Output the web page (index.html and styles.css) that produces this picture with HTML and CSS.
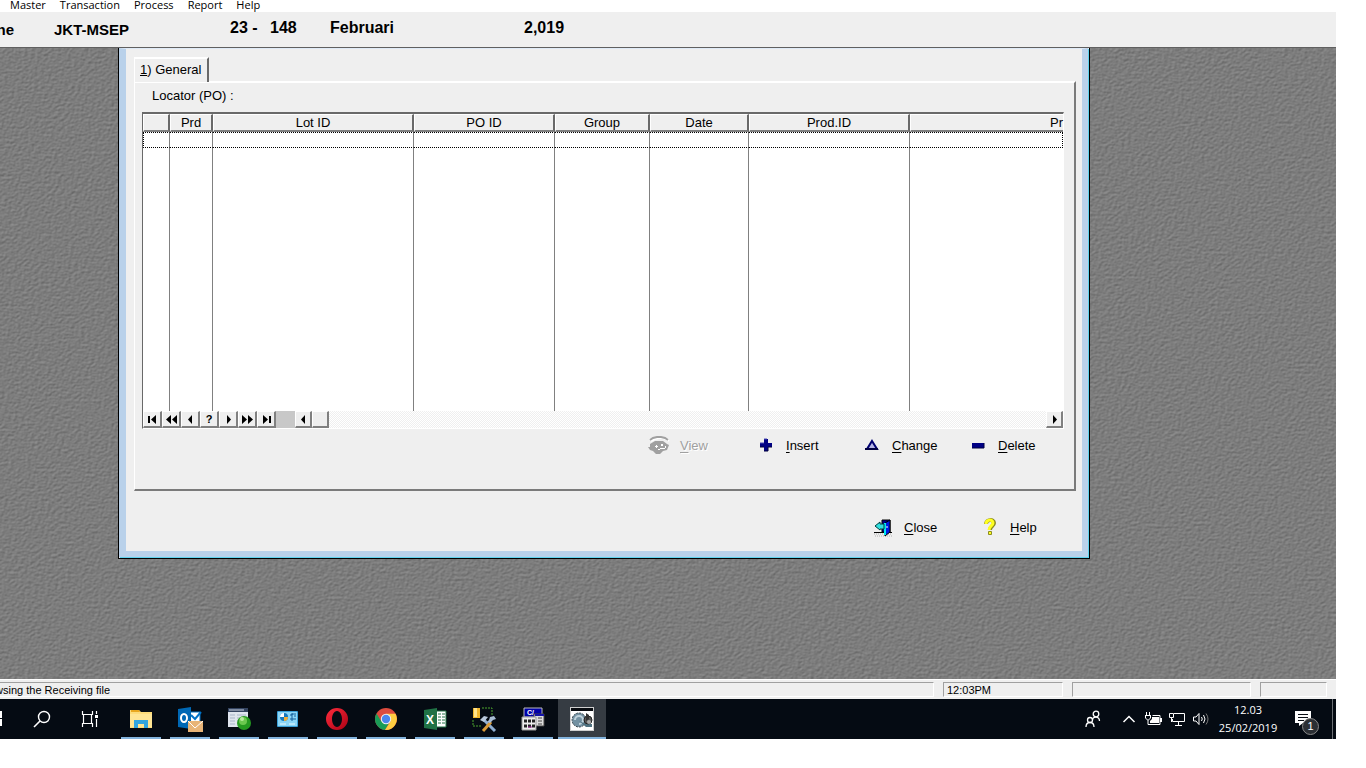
FILE: index.html
```html
<!DOCTYPE html>
<html lang="en">
<head>
    <meta charset="UTF-8">
    <meta name="viewport" content="width=device-width, initial-scale=1.0">
    <title>Receiving</title>
    <link rel="stylesheet" href="styles.css">
</head>
<body>

    <nav class="menu-bar">
        <a href="#">Master</a>
        <a href="#">Transaction</a>
        <a href="#">Process</a>
        <a href="#">Report</a>
        <a href="#">Help</a>
    </nav>

    <header class="info-bar">
        <span class="info-cut">ne</span>
        <span class="info-site">JKT-MSEP</span>
        <span class="info-day">23 -</span>
        <span class="info-number">148</span>
        <span class="info-month">Februari</span>
        <span class="info-year">2,019</span>
    </header>

    <main class="workspace">
        <!-- Embossed wallpaper -->
        <svg class="wallpaper" width="100%" height="100%" aria-hidden="true">
            <filter id="emboss" x="0" y="0" width="100%" height="100%" color-interpolation-filters="sRGB">
                <feTurbulence type="fractalNoise" baseFrequency="0.3 0.4" numOctaves="2" seed="4"/>
                <feDiffuseLighting surfaceScale="0.35" diffuseConstant="0.69" lighting-color="#fff">
                    <feDistantLight azimuth="235" elevation="45"/>
                </feDiffuseLighting>
            </filter>
            <rect width="100%" height="100%" filter="url(#emboss)"/>
        </svg>

        <section class="window">
            <div class="window-body">
                <div class="tabs" role="tablist">
                    <button class="tab" role="tab" aria-selected="true"><u>1</u>) General</button>
                </div>
                <div class="panel">
                    <p class="locator">Locator (PO) :</p>

                    <div class="browse">
                        <table>
                            <colgroup>
                                <col class="col-mark">
                                <col class="col-prd">
                                <col class="col-lot">
                                <col class="col-po">
                                <col class="col-group">
                                <col class="col-date">
                                <col class="col-prod">
                                <col>
                            </colgroup>
                            <thead>
                                <tr>
                                    <th></th>
                                    <th>Prd</th>
                                    <th>Lot ID</th>
                                    <th>PO ID</th>
                                    <th>Group</th>
                                    <th>Date</th>
                                    <th>Prod.ID</th>
                                    <th class="th-last">Pr</th>
                                </tr>
                            </thead>
                            <tbody>
                                <tr class="row-focus"><td></td><td></td><td></td><td></td><td></td><td></td><td></td><td></td></tr>
                                <tr class="row-rest"><td></td><td></td><td></td><td></td><td></td><td></td><td></td><td></td></tr>
                            </tbody>
                        </table>
                        <div class="navigator">
                            <button aria-label="First"><svg width="11" height="9"><path d="M1 1h2v7H1zM9 0v9L4 4.500z"/></svg></button>
                            <button aria-label="Page up"><svg width="11" height="9"><path d="M5 0v9L0 4.500zM11 0v9L6 4.500z"/></svg></button>
                            <button aria-label="Previous"><svg width="11" height="9"><path d="M7 0v9L3 4.500z"/></svg></button>
                            <button>?</button>
                            <button aria-label="Next"><svg width="11" height="9"><path d="M4 0v9l4-4.500z"/></svg></button>
                            <button aria-label="Page down"><svg width="11" height="9"><path d="M0 0v9l5-4.500zM6 0v9l5-4.500z"/></svg></button>
                            <button aria-label="Last"><svg width="11" height="9"><path d="M2 0v9l5-4.500zM8 1h2v7H8z"/></svg></button>
                            <span class="nav-gap"></span>
                            <button class="scroll-btn" aria-label="Scroll left"><svg width="11" height="9"><path d="M7 0v9L3 4.500z"/></svg></button>
                            <span class="scroll-thumb"></span>
                            <span class="scroll-track"></span>
                            <button class="scroll-btn" aria-label="Scroll right"><svg width="11" height="9"><path d="M4 0v9l4-4.500z"/></svg></button>
                        </div>
                    </div>

                    <div class="actions">
                        <button class="action" disabled>
                            <svg width="26" height="20" viewBox="0 0 26 20">
                                <path d="M4 5l4-2 4-1h4l3 1 3 2" fill="none" stroke="#fff" stroke-width="2" transform="translate(1 1)"/>
                                <path d="M4 5l3-2 4-1h4l4 1 3 2" fill="none" stroke="#a0a0a0" stroke-width="2"/>
                                <path d="M4 9l5-3h8l4 3 2 1-2 5-4 1-3 3h-4l-3-3-3-1-2-3h2z" fill="#a0a0a0"/>
                                <path d="M9 11h3v1H9zM10 10h1v3h-1zM15 9h2v2h-2zM14 13h5v1h-5zM19 11h1v2h-1zM12 14h2v1h-2z" fill="#fff"/>
                            </svg>
                            <span><u>V</u>iew</span>
                        </button>
                        <button class="action">
                            <svg width="26" height="20" viewBox="0 0 26 20">
                                <path d="M12 4h4v4h4v4h-4v4h-4v-4H8V8h4z" fill="#000084"/>
                                <path d="M12 4h3M8 8h4" stroke="#4a4ab5"/>
                                <path d="M8 12h4m0 4h4v-4h4" fill="none" stroke="#00003c"/>
                            </svg>
                            <span><u>I</u>nsert</span>
                        </button>
                        <button class="action">
                            <svg width="26" height="20" viewBox="0 0 26 20">
                                <path d="M14 6l5 8H9z" fill="#b4b4e6" stroke="#000070" stroke-width="2"/>
                                <path d="M7 14h13" stroke="#000040" stroke-width="2"/>
                            </svg>
                            <span><u>C</u>hange</span>
                        </button>
                        <button class="action">
                            <svg width="26" height="20" viewBox="0 0 26 20">
                                <rect x="8" y="8" width="12" height="5" fill="#000084"/>
                                <path d="M8 13h12V8" fill="none" stroke="#000040"/>
                            </svg>
                            <span><u>D</u>elete</span>
                        </button>
                    </div>
                </div>

                <div class="footer-actions">
                    <button class="action">
                        <svg width="26" height="20" viewBox="0 0 26 20">
                            <path d="M4 17h18M5 19h18" stroke="#b0b0b0" stroke-dasharray="1 1"/>
                            <path d="M4 15.500h18" stroke="#000"/>
                            <path d="M12 3h8v12h-8z" fill="#000084" stroke="#000"/>
                            <path d="M15 6l5-3v12l-5 4z" fill="#0018e0" stroke="#000"/>
                            <path d="M15 6v12" stroke="#00e8f0" stroke-width="2"/>
                            <path d="M17 9v2" stroke="#fff"/>
                            <path d="M5 9l5-4v2h4v5h-4v1z" fill="#30e0e0" stroke="#003c3c"/>
                        </svg>
                        <span><u>C</u>lose</span>
                    </button>
                    <button class="action">
                        <svg width="26" height="20" viewBox="0 0 26 20">
                            <path d="M10 7c0-5 8-5 8-1 0 3-4 3-4 7" fill="none" stroke="#8c8c20" stroke-width="4"/>
                            <path d="M10 7c0-5 7-5 7-1 0 3-4 3-4 7" fill="none" stroke="#ffff20" stroke-width="3"/>
                            <path d="M12.500 14.500h3v3h-3z" fill="#ffff20" stroke="#8c8c20"/>
                        </svg>
                        <span><u>H</u>elp</span>
                    </button>
                </div>
            </div>
        </section>
    </main>

    <div class="status-bar">
        <div class="status-message"><span>wsing the Receiving file</span></div>
        <div class="status-time">12:03PM</div>
        <div class="status-wide"></div>
        <div class="status-small"></div>
    </div>

    <footer class="taskbar">
        <button class="start" aria-label="Start"><svg width="2" height="16"><path d="M0 0h2v7H0zM0 8h2v7H0z" fill="#fff"/></svg></button>
        <button class="task-tool" aria-label="Search">
            <svg width="18" height="18" viewBox="0 0 18 18" fill="none" stroke="#fff"><circle cx="11" cy="7" r="5.500" stroke-width="1.400"/><path d="M7 11l-6 6" stroke-width="1.600"/></svg>
        </button>
        <button class="task-tool" aria-label="Task view">
            <svg width="18" height="18" viewBox="0 0 18 18" fill="none" stroke="#fff"><path d="M1.500 1v3.500h10V1M1.500 17v-3.500h10V17M2.500 4.500v9M10.500 4.500v9M15.500 1v3M15.500 9v8" stroke-width="1.200"/><path d="M14 5h3v3h-3z" fill="#fff" stroke="none"/></svg>
        </button>

        <div class="apps">
            <button class="app" aria-label="File Explorer">
                <svg width="24" height="24" viewBox="0 0 24 24"><path d="M1 3h9l2 2h11v16H1z" fill="#fddc7b"/><path d="M2 3h8l1 2H2z" fill="#e9a820"/><path d="M1 7h22v13H1z" fill="#ffe594"/><path d="M5 21v-8h14v8h-4v-4H9v4z" fill="#31a5e0"/></svg>
            </button>
            <button class="app" aria-label="Outlook">
                <svg width="28" height="26" viewBox="0 0 28 26"><path d="M14 6h10v11H14z" fill="#fff" stroke="#0072c6"/><path d="M15 9l4 4 6-7" fill="none" stroke="#0072c6" stroke-width="2"/><path d="M2 3l13-2v22L2 21z" fill="#0068b5"/><ellipse cx="8" cy="12" rx="3" ry="4" fill="none" stroke="#fff" stroke-width="2"/><path d="M12 15h15v11H12z" fill="#e8b477"/><path d="M12 15l7 7 8-7" fill="none" stroke="#fff"/></svg>
            </button>
            <button class="app" aria-label="Application server">
                <svg width="24" height="24" viewBox="0 0 24 24"><path d="M1 1h20v19H1z" fill="#dfe5ee"/><path d="M1 1h20v4H1z" fill="#33435f"/><path d="M2 3h15" stroke="#c9d2e2"/><path d="M3 8h5M3 11h5M3 14h5M3 17h5M10 8h9M10 11h7M10 14h4" stroke="#a9b5c9"/><circle cx="17" cy="16" r="7" fill="#259a20"/><circle cx="16" cy="14" r="4" fill="#6cc84f"/><circle cx="15" cy="12" r="2" fill="#b8eb9e"/></svg>
            </button>
            <button class="app" aria-label="Control Panel">
                <svg width="24" height="24" viewBox="0 0 24 24"><rect x="1" y="4" width="21" height="16" rx="1" fill="#3a9fd8"/><rect x="2" y="5" width="19" height="14" fill="#8bd6f7"/><circle cx="8" cy="10" r="4" fill="#1678bd"/><path d="M8 10V6a4 4 0 0 0-4 4z" fill="#fff"/><path d="M8 10h4a4 4 0 0 1-4 4z" fill="#f3ad35"/><path d="M14 8h2V7h4M14 12h6M16 6v8M18 9h2" stroke="#155f9b" fill="none"/><path d="M4 17h6M13 17h6" stroke="#e9faff"/></svg>
            </button>
            <button class="app" aria-label="Opera">
                <svg width="24" height="24" viewBox="0 0 24 24"><defs><linearGradient id="opera" x2="1" y2="1"><stop stop-color="#ff2d3d"/><stop offset="1" stop-color="#a90013"/></linearGradient></defs><path fill-rule="evenodd" d="M12 1a11 11 0 1 0 0 22 11 11 0 0 0 0-22zm0 3c3 0 5 4 5 8s-2 8-5 8-5-4-5-8 2-8 5-8z" fill="url(#opera)"/></svg>
            </button>
            <button class="app" aria-label="Chrome">
                <svg width="24" height="24" viewBox="0 0 24 24"><circle cx="12" cy="12" r="11" fill="#dd4b3e"/><path d="M2.500 6.500A11 11 0 0 0 11 23l5-8.700H7.200z" fill="#199c57"/><path d="M21.500 6.800H12l4.500 7.700L11 23A11 11 0 0 0 21.500 6.800z" fill="#ffcd40"/><circle cx="12" cy="12" r="5.200" fill="#f1f1f1"/><circle cx="12" cy="12" r="4.200" fill="#4c86ed"/></svg>
            </button>
            <button class="app" aria-label="Excel">
                <svg width="24" height="24" viewBox="0 0 24 24"><path d="M12 4h11v16H12z" fill="#fff" stroke="#207245"/><path d="M15 7h7M15 10h7M15 13h7M15 16h7" stroke="#207245"/><path d="M18.500 5v14" stroke="#fff"/><path d="M1 3l13-2v22L1 21z" fill="#207245"/><text x="3" y="17" font-family="Liberation Sans, sans-serif" font-size="12" font-weight="700" fill="#fff">X</text></svg>
            </button>
            <button class="app" aria-label="Database tools">
                <svg width="26" height="26" viewBox="0 0 26 26"><path d="M2 2h7v10H2z" fill="#f0b52c"/><path d="M3 2h3v9H3z" fill="#ffe28b"/><path d="M11 2h10v8M2 14v6h8" fill="none" stroke="#4ca52f" stroke-dasharray="2 1"/><path d="M12 13l12 12" stroke="#8faed1" stroke-width="3"/><path d="M9 14l4-4 4 1-4 5z" fill="#b9c9dc"/><path d="M12 25l8-9" stroke="#d99a38" stroke-width="3"/><path d="M19 17l3-3 3-1-2-3-4 1-1 3-2 2z" fill="#a9bdd5"/></svg>
            </button>
            <button class="app" aria-label="Clarion">
                <svg width="24" height="24" viewBox="0 0 24 24"><path d="M3 1h18v9H3z" fill="#0000a8" stroke="#bbb"/><text x="6" y="8" font-family="Liberation Sans, sans-serif" font-size="7" font-weight="700" fill="#fff">C/</text><path d="M13 7h10v12H13z" fill="#ddd" stroke="#444"/><path d="M14 8h9" stroke="#1414a8" stroke-width="2"/><path d="M17 11h4M17 14h4M17 17h4" stroke="#444"/><path d="M1 10h14v13H1z" fill="#eee" stroke="#999"/><path d="M3 14h11M3 19h11" stroke="#222" stroke-width="3" stroke-dasharray="3 1"/><path d="M7 20h4" stroke="#a0249c"/></svg>
            </button>
            <button class="app app-active" aria-label="Receiving">
                <svg width="24" height="24" viewBox="0 0 24 24"><path d="M0 0h24v24H0z" fill="#cfcfcf"/><path d="M1 1h22v3H1z" fill="#080b10"/><path d="M1 4h22v19H1z" fill="#fff"/><circle cx="9" cy="13" r="7" fill="#7391a2" stroke="#37444d" stroke-dasharray="2 1"/><path d="M5 13a4 4 0 1 1 4 4" fill="none" stroke="#bfd2dc" stroke-width="2"/><path d="M9 14l7 6h6v-3h-6z" fill="#4e7180"/><circle cx="18" cy="13" r="4" fill="#585858" stroke="#222"/><path d="M16 6l3 2v4l-3 2z" fill="#333"/><circle cx="19" cy="15" r="2" fill="#aaa"/></svg>
            </button>
        </div>

        <div class="tray">
            <button class="people" aria-label="People">
                <svg width="18" height="18" viewBox="0 0 18 18" fill="none" stroke="#fff" stroke-width="1.300"><circle cx="12" cy="4" r="2.800"/><path d="M8.500 10c0-4 7-4 7 1"/><circle cx="6" cy="10" r="2.500"/><path d="M2 17c0-6 8-6 8 0"/></svg>
            </button>
            <button aria-label="Show hidden icons"><svg width="14" height="10" fill="none" stroke="#fff" stroke-width="1.500"><path d="M1.500 8L7 2.500 12.500 8"/></svg></button>
            <button aria-label="Battery"><svg width="18" height="16" viewBox="0 0 18 16"><path d="M2.500 1v3M5.500 1v3M1 4.500h6M1.500 4v3l2 2h1l2-2V4M4 9v4.500h12v-9H8.500" fill="none" stroke="#fff"/><path d="M8 6h7v6H6v-2l2-2zM16 7h2v4h-2z" fill="#fff"/></svg></button>
            <button aria-label="Network"><svg width="18" height="16" viewBox="0 0 18 16" fill="none" stroke="#fff"><path d="M6 2.500h10.500v8h-12V8M10.500 10v4M7 14.500h7M1.500 2.500h4v4h-4zM3.500 7v4"/></svg></button>
            <button aria-label="Volume"><svg width="18" height="16" viewBox="0 0 18 16" fill="none" stroke="#fff"><path d="M1.500 6H4l3-3.500v11L4 10H1.500z"/><path d="M9.500 6q1.500 2 0 4M11.500 4q3 4 0 8"/><path d="M14 2.500q4 5.500 0 11" stroke="#777"/></svg></button>
            <button class="clock"><span>12.03</span><span>25/02/2019</span></button>
            <button class="notifications" aria-label="Notifications">
                <svg width="18" height="16" viewBox="0 0 18 16"><path d="M0 0h16v12H8l-4 3v-3H0z" fill="#fff"/><path d="M3 3.500h10M3 6.500h10M3 9.500h6" stroke="#0a0f16"/></svg>
                <span class="badge">1</span>
            </button>
            <span class="show-desktop"></span>
        </div>
    </footer>

</body>
</html>
```
FILE: styles.css
```css
* {
    box-sizing: border-box;
}

body {
    font-family: "Liberation Sans", Arial, sans-serif;
    font-size: 13px;
    color: #000;
    margin: 0;
    padding: 0 30px 29px 0;
    min-height: 100vh;
    display: flex;
    flex-direction: column;
    background-color: #fff;
}

button {
    font-family: inherit;
    font-size: inherit;
    color: inherit;
    background: none;
    border: none;
    margin: 0;
    padding: 0;
}

/* Menu and info bar */
.menu-bar {
    display: flex;
    align-items: flex-end;
    gap: 14px;
    height: 12px;
    padding-left: 10px;
    font-family: "Open Sans", sans-serif;
    font-size: 11px;
    line-height: 14px;
}

.menu-bar a {
    color: #000;
    text-decoration: none;
}

.info-bar {
    display: flex;
    height: 36px;
    background-color: #efefef;
    border-bottom: 1px solid #606060;
    font-size: 16px;
    font-weight: bold;
    line-height: 32px;
    white-space: pre;
}

.info-cut,
.info-site {
    font-size: 15px;
    line-height: 36px;
}

.info-cut {
    display: flex;
    justify-content: flex-end;
    width: 14px;
    margin-right: 40px;
}

.info-site {
    width: 176px;
}

.info-day {
    width: 40px;
}

.info-number {
    width: 60px;
}

.info-month {
    width: 194px;
}

/* Desktop area */
.workspace {
    position: relative;
    flex: 1;
    padding: 0 246px 120px 118px;
    background-color: #7b7b7b;
}

.wallpaper {
    position: absolute;
    top: 0;
    left: 0;
}

.window {
    position: relative;
    border: 1px solid #000;
    border-top: none;
    background-color: #efefef;
}

.window-body {
    border: 6px solid #b9d1ea;
    border-top: 1px solid #dfeaf7;
    box-shadow: 1px 1px 0 #5fd3ee;
    margin: 0 1px 1px 0;
    border-left-width: 7px;
    padding: 8px 6px 0 8px;
}

.tabs {
    display: flex;
}

.tab {
    position: relative;
    height: 25px;
    margin-bottom: -1px;
    padding: 0 6px 2px 5px;
    border-top: 2px solid #fff;
    border-left: 1px solid #fff;
    border-right: 2px solid #696969;
    background-color: #efefef;
}

.panel {
    height: 410px;
    padding: 0 10px 0 7px;
    border: 1px solid #fff;
    border-top-width: 2px;
    border-right: 2px solid #7a7a7a;
    border-bottom: 2px solid #7a7a7a;
}

.locator {
    margin: 0;
    padding: 3px 0 0 10px;
    height: 29px;
    line-height: 20px;
}

/* Browse table */
.browse {
    border: 1px solid #696969;
    border-top: 2px solid #696969;
    border-right-color: #fff;
    border-bottom-color: #fff;
    background-color: #fff;
}

table {
    width: 100%;
    table-layout: fixed;
    border-collapse: separate;
    border-spacing: 0;
}

.col-mark {
    width: 27px;
}

.col-prd {
    width: 43px;
}

.col-lot {
    width: 201px;
}

.col-po {
    width: 141px;
}

.col-group {
    width: 95px;
}

.col-date {
    width: 99px;
}

.col-prod {
    width: 161px;
}

th {
    height: 18px;
    padding: 0;
    font-weight: normal;
    line-height: 14px;
    background-color: #efefef;
    border-top: 1px solid #fff;
    border-left: 1px solid #fff;
    border-right: 2px solid #696969;
    border-bottom: 2px solid #808080;
    white-space: nowrap;
}

.th-last {
    text-align: right;
    border-right: none;
}

td {
    padding: 0;
    border-right: 1px solid #808080;
}

td:last-child {
    border-right: none;
}

.row-focus td {
    height: 16px;
    border-top: 1px dotted #000;
    border-bottom: 1px dotted #000;
}

.row-focus td:first-child {
    border-left: 1px dotted #000;
}

.row-focus td:last-child {
    border-right: 1px dotted #000;
}

.row-rest td {
    height: 263px;
}

.navigator {
    display: flex;
    height: 17px;
}

.navigator button,
.scroll-thumb {
    display: flex;
    justify-content: center;
    align-items: center;
    width: 19px;
    background-color: #efefef;
    border: 1px solid #fff;
    border-right: 2px solid #808080;
    border-bottom: 2px solid #808080;
    font-size: 11px;
    font-weight: bold;
}

.navigator .scroll-btn,
.scroll-thumb {
    width: 17px;
}

.nav-gap {
    width: 19px;
    background-color: #c8c8c8;
}

.scroll-track {
    flex: 1;
    background: repeating-conic-gradient(#efefef 0 25%, #fff 0 50%) 0 0 / 2px 2px;
}

/* Buttons with icons */
.actions,
.footer-actions {
    display: flex;
    justify-content: flex-end;
    gap: 6px;
}

.actions {
    padding-top: 6px;
}

.footer-actions {
    padding: 26px 0 14px;
}

.action {
    display: flex;
    align-items: center;
    gap: 8px;
    width: 100px;
    height: 20px;
}

.action:disabled {
    color: #a0a0a0;
    text-shadow: 1px 1px 0 #fff;
}

.action u {
    text-underline-offset: 2px;
}

/* Status bar */
.status-bar {
    display: flex;
    gap: 9px;
    height: 20px;
    padding: 2px 9px 2px 0;
    background-color: #efefef;
    border-top: 1px solid #fff;
    font-size: 11px;
    line-height: 14px;
    white-space: nowrap;
}

.status-bar div {
    border: 1px solid #fff;
    border-top-color: #a0a0a0;
    border-left-color: #a0a0a0;
    padding-left: 3px;
}

.status-bar .status-message {
    flex: 1;
    border-left: none;
    padding-left: 0;
}

/* Long messages run out to the left */
.status-message span {
    display: flex;
    justify-content: flex-end;
    width: 110px;
}

.status-time {
    width: 120px;
}

.status-wide {
    width: 179px;
}

.status-small {
    width: 67px;
}

/* Taskbar */
.taskbar {
    display: flex;
    height: 40px;
    background-color: #050b13;
    color: #fff;
}

.taskbar button {
    display: flex;
    justify-content: center;
    align-items: center;
}

.taskbar .start {
    justify-content: flex-start;
    width: 18px;
}

.task-tool {
    width: 48px;
}

.apps {
    display: flex;
    gap: 1px;
    margin-left: 3px;
}

.app {
    position: relative;
    width: 48px;
}

.app::after {
    content: "";
    position: absolute;
    left: 4px;
    right: 4px;
    bottom: 0;
    height: 2px;
    background-color: #83b4de;
}

.app-active {
    background-color: #363c43;
}

.app-active::after {
    left: 0;
    right: 0;
}

.tray {
    display: flex;
    margin-left: auto;
}

.tray button {
    width: 24px;
}

.tray .people {
    width: 48px;
}

.tray .clock {
    flex-direction: column;
    width: 70px;
    font-family: "Open Sans", sans-serif;
    font-size: 11px;
    line-height: 18px;
}

.tray .notifications {
    position: relative;
    justify-content: flex-start;
    width: 49px;
    padding-left: 12px;
}

.badge {
    position: absolute;
    left: 19px;
    top: 19px;
    width: 17px;
    height: 17px;
    border: 1px solid #888;
    border-radius: 50%;
    background-color: #2b2f34;
    font-size: 11px;
    line-height: 15px;
}

.show-desktop {
    width: 4px;
    border-left: 1px solid #6b6f74;
}
```
